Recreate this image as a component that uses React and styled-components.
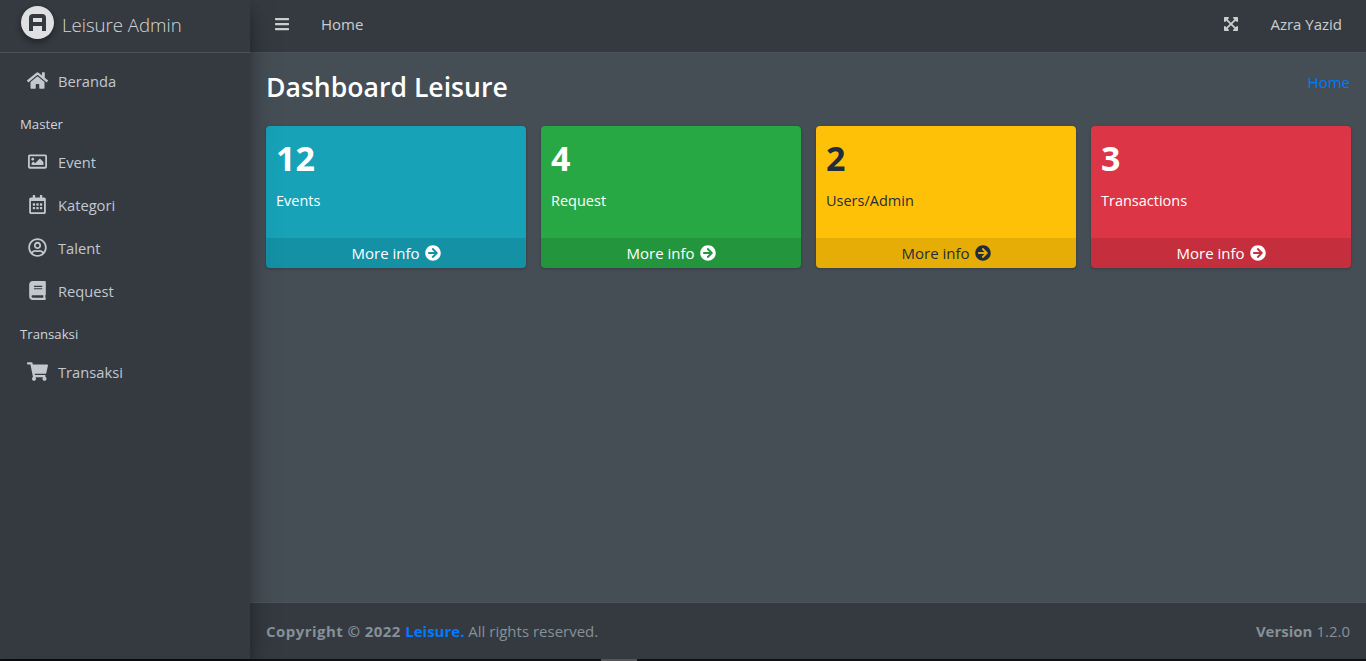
import styled, { createGlobalStyle } from "styled-components";
import {
  FaHome,
  FaRegImage,
  FaRegCalendarAlt,
  FaRegUserCircle,
  FaBook,
  FaShoppingCart,
  FaBars,
  FaExpandArrowsAlt,
  FaArrowCircleRight,
} from "react-icons/fa";

const GlobalStyle = createGlobalStyle`
  html, body {
    margin: 0;
    height: 100%;
    background: #111;
  }
  body {
    font-family: "Open Sans", "Noto Sans", sans-serif;
    font-size: 15px;
    color: #fff;
    overflow: hidden;
  }
`;

const Wrapper = styled.div`
  display: flex;
  width: 1366px;
  height: 659px;
`;

const Sidebar = styled.aside`
  width: 250px;
  flex-shrink: 0;
  background: #343a40;
  box-shadow: 0 14px 28px rgba(0, 0, 0, 0.25), 0 10px 10px rgba(0, 0, 0, 0.22);
  position: relative;
  z-index: 2;
`;

const Brand = styled.div`
  height: 53px;
  box-sizing: border-box;
  border-bottom: 1px solid #4b545c;
  display: flex;
  align-items: center;
  padding: 0 0 4px 21px;
  gap: 8px;
  color: rgba(255, 255, 255, 0.8);
  font-size: 18.6px;
  font-weight: 300;
`;

const Logo = styled.div`
  width: 33px;
  height: 33px;
  margin-bottom: 3px;
  border-radius: 50%;
  background: #dfe0e1;
  box-shadow: 0 3px 6px rgba(0, 0, 0, 0.16), 0 3px 6px rgba(0, 0, 0, 0.23);
  display: flex;
  align-items: center;
  justify-content: center;
`;

const Nav = styled.nav`
  display: flex;
  flex-direction: column;
  padding-top: 6px;
`;

const NavItem = styled.div`
  height: 43px;
  display: flex;
  align-items: center;
  padding-left: 27px;
  gap: 10px;
  color: #c2c7d0;
  font-size: 14.7px;
  svg {
    width: 21px;
    font-size: 19px;
  }
`;

const NavHeader = styled.div`
  height: 38px;
  box-sizing: border-box;
  padding: 5px 0 0 20px;
  display: flex;
  align-items: center;
  color: #d0d4db;
  font-size: 13.2px;
`;

const Main = styled.div`
  flex: 1;
  display: flex;
  flex-direction: column;
  background: #454d55;
  min-width: 0;
`;

const Topbar = styled.header`
  height: 53px;
  box-sizing: border-box;
  background: #343a40;
  border-bottom: 1px solid #4b545c;
  display: flex;
  align-items: center;
  padding: 0 24px 4px;
  color: rgba(255, 255, 255, 0.75);
  font-size: 15px;
`;

const MenuButton = styled.span`
  display: flex;
  font-size: 16px;
  margin-right: 31px;
`;

const TopRight = styled.div`
  margin-left: auto;
  display: flex;
  align-items: center;
  gap: 31px;
  svg {
    font-size: 16px;
  }
`;

const Content = styled.main`
  flex: 1;
  padding: 0 16px;
`;

const TitleRow = styled.div`
  display: flex;
  justify-content: space-between;
  align-items: flex-start;
  padding-top: 15px;
  height: 73px;
  box-sizing: border-box;
`;

const Title = styled.h1`
  margin: 0;
  font-size: 26.6px;
  line-height: 38px;
  font-weight: 600;
  color: #fff;
`;

const Crumb = styled.a`
  color: #007bff;
  font-size: 15px;
  line-height: 28px;
`;

const Cards = styled.div`
  display: grid;
  grid-template-columns: repeat(4, 260px);
  gap: 15px;
`;

const Card = styled.div`
  height: 142px;
  border-radius: 4px;
  overflow: hidden;
  display: flex;
  flex-direction: column;
  background: ${(p) => p.$bg};
  color: ${(p) => p.$fg};
  box-shadow: 0 0 1px rgba(0, 0, 0, 0.125), 0 1px 3px rgba(0, 0, 0, 0.2);
`;

const CardBody = styled.div`
  flex: 1;
  padding: 10px;
`;

const Count = styled.div`
  font-size: 34px;
  line-height: 44px;
  font-weight: 700;
`;

const Label = styled.div`
  margin-top: 11px;
  font-size: 14.5px;
  line-height: 20px;
`;

const CardFooter = styled.div`
  height: 30px;
  background: rgba(0, 0, 0, 0.1);
  display: flex;
  align-items: center;
  justify-content: center;
  gap: 5px;
  font-size: 15px;
  svg {
    font-size: 16px;
  }
`;

const Footer = styled.footer`
  height: 57px;
  box-sizing: border-box;
  background: #343a40;
  border-top: 1px solid #4b545c;
  display: flex;
  align-items: center;
  justify-content: space-between;
  padding: 0 16px;
  color: #869099;
  font-size: 15px;
  b {
    font-weight: 700;
  }
`;

const Copyright = styled.b`
  letter-spacing: 0.45px;
`;

const FooterLink = styled.b`
  color: #007bff;
`;

const BottomMark = styled.div`
  position: fixed;
  left: 601px;
  bottom: 0;
  width: 36px;
  height: 2px;
  background: #555;
`;

const nav = [
  { type: "item", icon: FaHome, text: "Beranda" },
  { type: "header", text: "Master" },
  { type: "item", icon: FaRegImage, text: "Event" },
  { type: "item", icon: FaRegCalendarAlt, text: "Kategori" },
  { type: "item", icon: FaRegUserCircle, text: "Talent" },
  { type: "item", icon: FaBook, text: "Request" },
  { type: "header", text: "Transaksi" },
  { type: "item", icon: FaShoppingCart, text: "Transaksi" },
];

const stats = [
  { count: "12", label: "Events", bg: "#17a2b8", fg: "#fff" },
  { count: "4", label: "Request", bg: "#28a745", fg: "#fff" },
  { count: "2", label: "Users/Admin", bg: "#ffc107", fg: "#1f2d3d" },
  { count: "3", label: "Transactions", bg: "#dc3545", fg: "#fff" },
];

const App = () => {
  return (
    <Wrapper>
      <GlobalStyle />
      <Sidebar>
        <Brand>
          <Logo>
            <svg width="19" height="19" viewBox="0 0 19 19">
              <path
                fillRule="evenodd"
                fill="#343a40"
                d="M5 1h9a4 4 0 0 1 4 4v13h-4v-5H5v5H1V5a4 4 0 0 1 4-4zM5 5v4h9V5z"
              />
            </svg>
          </Logo>
          Leisure Admin
        </Brand>
        <Nav>
          {nav.map((n, i) =>
            n.type === "header" ? (
              <NavHeader key={i}>{n.text}</NavHeader>
            ) : (
              <NavItem key={i}>
                <n.icon />
                {n.text}
              </NavItem>
            )
          )}
        </Nav>
      </Sidebar>
      <Main>
        <Topbar>
          <MenuButton>
            <FaBars />
          </MenuButton>
          Home
          <TopRight>
            <FaExpandArrowsAlt />
            <span>Azra Yazid</span>
          </TopRight>
        </Topbar>
        <Content>
          <TitleRow>
            <Title>Dashboard Leisure</Title>
            <Crumb>Home</Crumb>
          </TitleRow>
          <Cards>
            {stats.map((s) => (
              <Card key={s.label} $bg={s.bg} $fg={s.fg}>
                <CardBody>
                  <Count>{s.count}</Count>
                  <Label>{s.label}</Label>
                </CardBody>
                <CardFooter>
                  More info <FaArrowCircleRight />
                </CardFooter>
              </Card>
            ))}
          </Cards>
        </Content>
        <Footer>
          <span>
            <Copyright>Copyright © 2022 </Copyright>
            <FooterLink>Leisure.</FooterLink> All rights reserved.
          </span>
          <span>
            <b>Version</b> 1.2.0
          </span>
        </Footer>
      </Main>
      <BottomMark />
    </Wrapper>
  );
};

export default App;
